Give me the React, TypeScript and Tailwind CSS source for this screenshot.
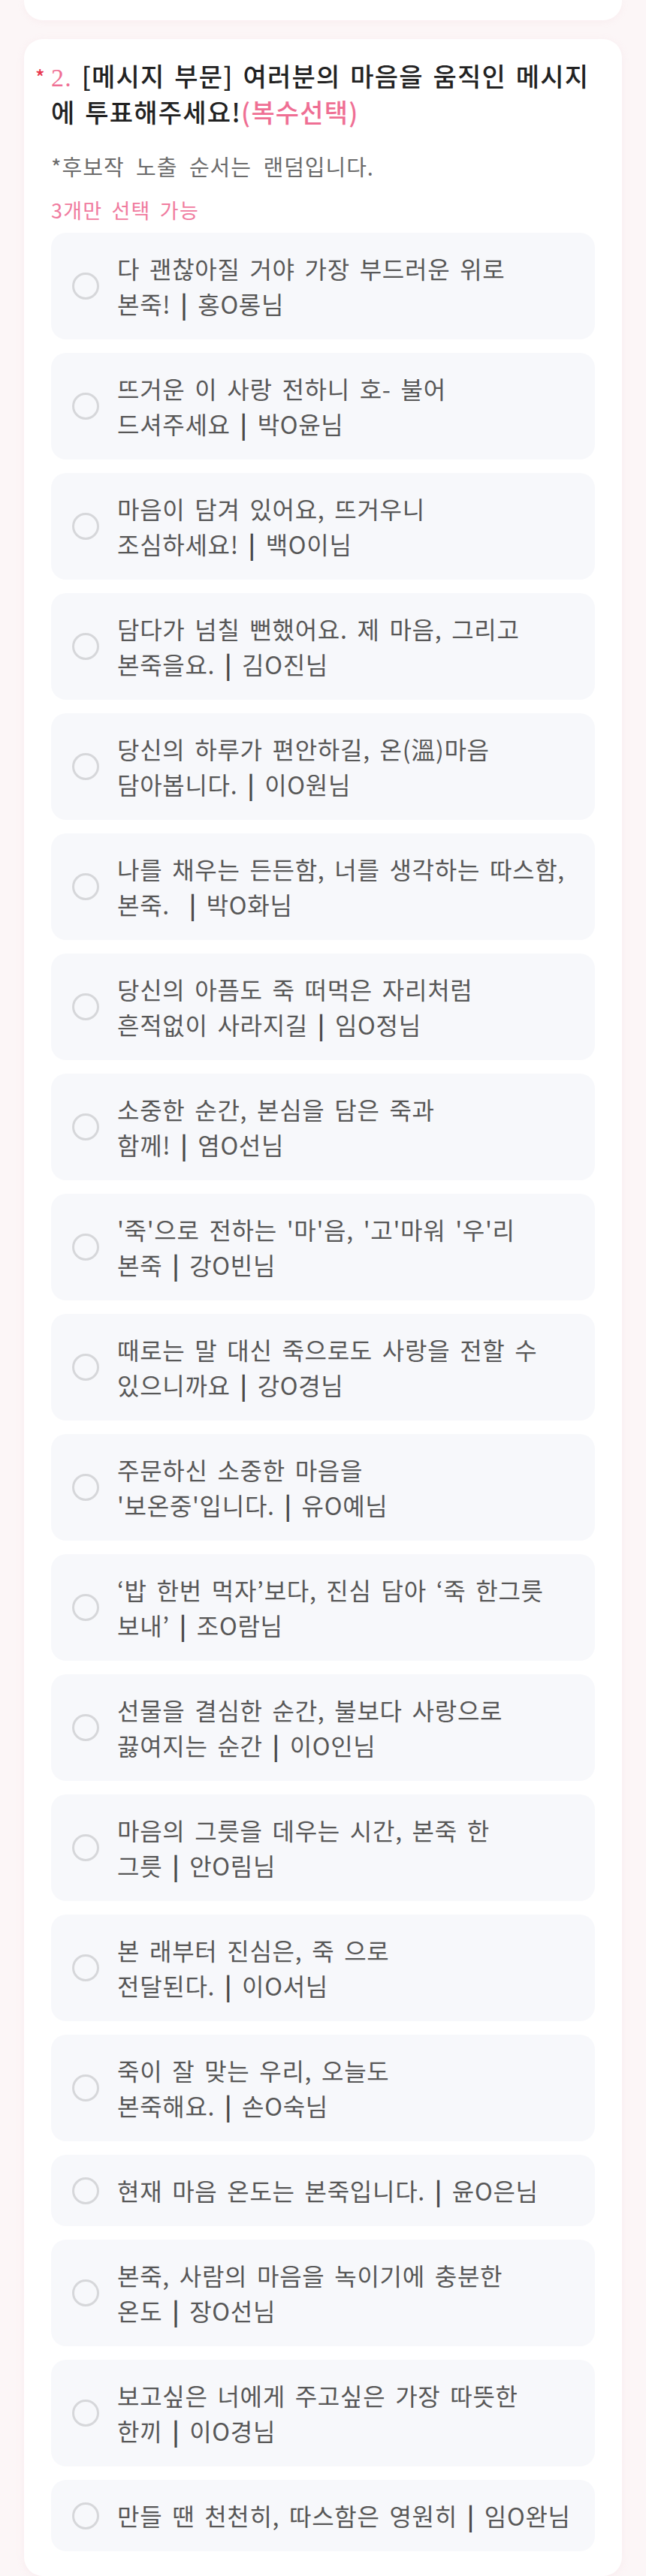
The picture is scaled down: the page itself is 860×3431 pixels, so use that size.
const FONT = '"Noto Sans CJK KR", "Noto Sans", sans-serif'

const options: string[][] = [
  ['다 괜찮아질 거야 가장 부드러운 위로', '본죽! | 홍O롱님'],
  ['뜨거운 이 사랑 전하니 호- 불어', '드셔주세요 | 박O윤님'],
  ['마음이 담겨 있어요, 뜨거우니', '조심하세요! | 백O이님'],
  ['담다가 넘칠 뻔했어요. 제 마음, 그리고', '본죽을요. | 김O진님'],
  ['당신의 하루가 편안하길, 온(溫)마음', '담아봅니다. | 이O원님'],
  ['나를 채우는 든든함, 너를 생각하는 따스함,', '본죽.  | 박O화님'],
  ['당신의 아픔도 죽 떠먹은 자리처럼', '흔적없이 사라지길 | 임O정님'],
  ['소중한 순간, 본심을 담은 죽과', '함께! | 염O선님'],
  ["'죽'으로 전하는 '마'음, '고'마워 '우'리", '본죽 | 강O빈님'],
  ['때로는 말 대신 죽으로도 사랑을 전할 수', '있으니까요 | 강O경님'],
  ['주문하신 소중한 마음을', "'보온중'입니다. | 유O예님"],
  ['‘밥 한번 먹자’보다, 진심 담아 ‘죽 한그릇', '보내’ | 조O람님'],
  ['선물을 결심한 순간, 불보다 사랑으로', '끓여지는 순간 | 이O인님'],
  ['마음의 그릇을 데우는 시간, 본죽 한', '그릇 | 안O림님'],
  ['본 래부터 진심은, 죽 으로', '전달된다. | 이O서님'],
  ['죽이 잘 맞는 우리, 오늘도', '본죽해요. | 손O숙님'],
  ['현재 마음 온도는 본죽입니다. | 윤O은님'],
  ['본죽, 사람의 마음을 녹이기에 충분한', '온도 | 장O선님'],
  ['보고싶은 너에게 주고싶은 가장 따뜻한', '한끼 | 이O경님'],
  ['만들 땐 천천히, 따스함은 영원히 | 임O완님'],
]

function Line({ text }: { text: string }) {
  const parts = text.split('|')
  if (parts.length === 1) return <div className="whitespace-pre">{text}</div>
  return (
    <div className="whitespace-pre">
      {parts[0]}
      <span className="font-bold text-[#4a4a4a]">|</span>
      {parts[1]}
    </div>
  )
}

function OptionCard({ lines }: { lines: string[] }) {
  return (
    <label className="flex cursor-pointer items-center rounded-[20px] bg-[#f7f8fb] py-6 pl-7 pr-2">
      <span className="h-[36px] w-[36px] shrink-0 rounded-full border-[3px] border-[#d6d7da] bg-[#f7f8fb]" />
      <div className="ml-[24px] text-[32px] leading-[47px] tracking-[0.7px] text-[#575757] [word-spacing:5px]">
        {lines.map((l) => (
          <Line key={l} text={l} />
        ))}
      </div>
    </label>
  )
}

export default function App() {
  return (
    <div className="min-h-[3431px] bg-[#fcf6f7] px-8" style={{ fontFamily: FONT }}>
      <div className="h-[27px] rounded-b-[25px] bg-white shadow-[0_2px_10px_rgba(230,180,190,0.12)]" />

      <div className="mt-[25px] rounded-[25px] bg-white px-9 pb-[33px] pt-[26px] shadow-[0_2px_12px_rgba(230,180,190,0.14)]">
        <div className="relative text-[34px] font-medium leading-[45px] tracking-[1.2px] text-[#222] [word-spacing:4px]">
          <span className="absolute -left-[21px] top-[1px] text-[26px] text-[#e8384f]">*</span>
          <div className="whitespace-pre">
            <span className="text-[#ef6f94]" style={{ fontFamily: '"Liberation Serif", serif' }}>
              2.
            </span>{' '}
            [메시지 부문] 여러분의 마음을 움직인 메시지
          </div>
          <div className="whitespace-pre">
            에 투표해주세요!<span className="text-[#ef6f94]">(복수선택)</span>
          </div>
        </div>

        <p className="mt-8 text-[29px] leading-[36px] tracking-[1px] text-[#6b6b6b] [word-spacing:8px]">
          *후보작 노출 순서는 랜덤입니다.
        </p>
        <p className="mt-[23px] text-[27px] leading-[36px] tracking-[1.2px] text-[#f07a9e] [word-spacing:5px]">
          3개만 선택 가능
        </p>

        <div className="mt-3 flex flex-col gap-[18px]">
          {options.map((o) => (
            <OptionCard key={o[0]} lines={o} />
          ))}
        </div>
      </div>
    </div>
  )
}
